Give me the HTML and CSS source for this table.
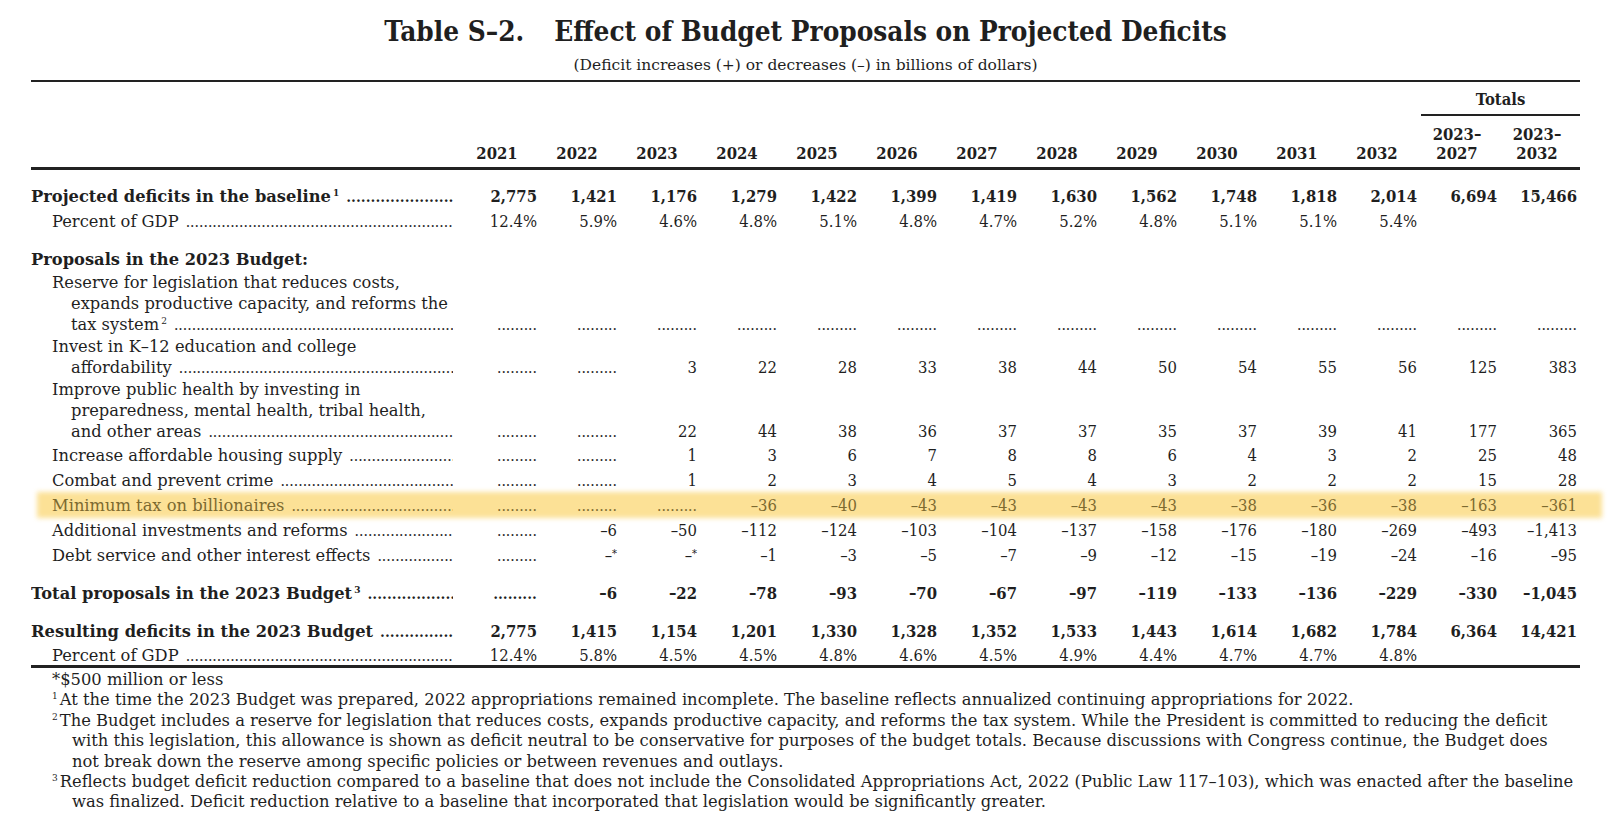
FILE: index.html
```html
<!DOCTYPE html>
<html lang="en">
<head>
<meta charset="utf-8">
<title>Table S-2. Effect of Budget Proposals on Projected Deficits</title>
<link rel="stylesheet" href="styles.css">
</head>
<body>
<div class="page">
  <h1 class="title"><span class="tno">Table S–2.</span><span>Effect of Budget Proposals on Projected Deficits</span></h1>
  <p class="subtitle">(Deficit increases (+) or decreases (–) in billions of dollars)</p>

  <div class="table">
    <div class="grid totals-row"><div class="totals">Totals</div></div>
    <div class="grid years">
      <div></div>
      <div>2021</div><div>2022</div><div>2023</div><div>2024</div><div>2025</div><div>2026</div>
      <div>2027</div><div>2028</div><div>2029</div><div>2030</div><div>2031</div><div>2032</div>
      <div>2023–<br>2027</div><div>2023–<br>2032</div>
    </div>

    <div class="tbody">
      <div class="grid row bold">
        <div class="lbl l0">Projected deficits in the baseline<sup>1</sup></div>
        <div>2,775</div><div>1,421</div><div>1,176</div><div>1,279</div><div>1,422</div><div>1,399</div><div>1,419</div><div>1,630</div><div>1,562</div><div>1,748</div><div>1,818</div><div>2,014</div><div>6,694</div><div>15,466</div>
      </div>
      <div class="grid row">
        <div class="lbl l1">Percent of GDP</div>
        <div>12.4%</div><div>5.9%</div><div>4.6%</div><div>4.8%</div><div>5.1%</div><div>4.8%</div><div>4.7%</div><div>5.2%</div><div>4.8%</div><div>5.1%</div><div>5.1%</div><div>5.4%</div><div></div><div></div>
      </div>

      <div class="spacer"></div>

      <div class="grid row bold">
        <div class="lbl l0 nodots">Proposals in the 2023 Budget:</div>
      </div>
      <div class="grid row ml">
        <div class="lbl l1">Reserve for legislation that reduces costs,<br>expands productive capacity, and reforms the<br>tax system<sup>2</sup></div>
        <div class="e"></div><div class="e"></div><div class="e"></div><div class="e"></div><div class="e"></div><div class="e"></div><div class="e"></div><div class="e"></div><div class="e"></div><div class="e"></div><div class="e"></div><div class="e"></div><div class="e"></div><div class="e"></div>
      </div>
      <div class="grid row ml">
        <div class="lbl l1">Invest in K–12 education and college<br>affordability</div>
        <div class="e"></div><div class="e"></div><div>3</div><div>22</div><div>28</div><div>33</div><div>38</div><div>44</div><div>50</div><div>54</div><div>55</div><div>56</div><div>125</div><div>383</div>
      </div>
      <div class="grid row ml">
        <div class="lbl l1">Improve public health by investing in<br>preparedness, mental health, tribal health,<br>and other areas</div>
        <div class="e"></div><div class="e"></div><div>22</div><div>44</div><div>38</div><div>36</div><div>37</div><div>37</div><div>35</div><div>37</div><div>39</div><div>41</div><div>177</div><div>365</div>
      </div>
      <div class="grid row">
        <div class="lbl l1">Increase affordable housing supply</div>
        <div class="e"></div><div class="e"></div><div>1</div><div>3</div><div>6</div><div>7</div><div>8</div><div>8</div><div>6</div><div>4</div><div>3</div><div>2</div><div>25</div><div>48</div>
      </div>
      <div class="grid row">
        <div class="lbl l1">Combat and prevent crime</div>
        <div class="e"></div><div class="e"></div><div>1</div><div>2</div><div>3</div><div>4</div><div>5</div><div>4</div><div>3</div><div>2</div><div>2</div><div>2</div><div>15</div><div>28</div>
      </div>
      <div class="grid row hl">
        <div class="lbl l1">Minimum tax on billionaires</div>
        <div class="e"></div><div class="e"></div><div class="e"></div><div>–36</div><div>–40</div><div>–43</div><div>–43</div><div>–43</div><div>–43</div><div>–38</div><div>–36</div><div>–38</div><div>–163</div><div>–361</div>
      </div>
      <div class="grid row">
        <div class="lbl l1">Additional investments and reforms</div>
        <div class="e"></div><div>–6</div><div>–50</div><div>–112</div><div>–124</div><div>–103</div><div>–104</div><div>–137</div><div>–158</div><div>–176</div><div>–180</div><div>–269</div><div>–493</div><div>–1,413</div>
      </div>
      <div class="grid row">
        <div class="lbl l1">Debt service and other interest effects</div>
        <div class="e"></div><div>–<span class="star">*</span></div><div>–<span class="star">*</span></div><div>–1</div><div>–3</div><div>–5</div><div>–7</div><div>–9</div><div>–12</div><div>–15</div><div>–19</div><div>–24</div><div>–16</div><div>–95</div>
      </div>

      <div class="spacer"></div>

      <div class="grid row bold">
        <div class="lbl l0">Total proposals in the 2023 Budget<sup>3</sup></div>
        <div class="e"></div><div>–6</div><div>–22</div><div>–78</div><div>–93</div><div>–70</div><div>–67</div><div>–97</div><div>–119</div><div>–133</div><div>–136</div><div>–229</div><div>–330</div><div>–1,045</div>
      </div>

      <div class="spacer"></div>

      <div class="grid row bold">
        <div class="lbl l0">Resulting deficits in the 2023 Budget</div>
        <div>2,775</div><div>1,415</div><div>1,154</div><div>1,201</div><div>1,330</div><div>1,328</div><div>1,352</div><div>1,533</div><div>1,443</div><div>1,614</div><div>1,682</div><div>1,784</div><div>6,364</div><div>14,421</div>
      </div>
      <div class="grid row last">
        <div class="lbl l1">Percent of GDP</div>
        <div>12.4%</div><div>5.8%</div><div>4.5%</div><div>4.5%</div><div>4.8%</div><div>4.6%</div><div>4.5%</div><div>4.9%</div><div>4.4%</div><div>4.7%</div><div>4.7%</div><div>4.8%</div><div></div><div></div>
      </div>
    </div>
  </div>

  <div class="notes">
    <p class="fn">*$500 million or less</p>
    <p class="fn"><sup>1</sup>At the time the 2023 Budget was prepared, 2022 appropriations remained incomplete. The baseline reflects annualized continuing appropriations for 2022.</p>
    <p class="fn"><sup>2</sup>The Budget includes a reserve for legislation that reduces costs, expands productive capacity, and reforms the tax system. While the President is committed to reducing the deficit<br>with this legislation, this allowance is shown as deficit neutral to be conservative for purposes of the budget totals. Because discussions with Congress continue, the Budget does<br>not break down the reserve among specific policies or between revenues and outlays.</p>
    <p class="fn"><sup>3</sup>Reflects budget deficit reduction compared to a baseline that does not include the Consolidated Appropriations Act, 2022 (Public Law 117–103), which was enacted after the baseline<br>was finalized. Deficit reduction relative to a baseline that incorporated that legislation would be significantly greater.</p>
  </div>
</div>
</body>
</html>
```

FILE: styles.css
```css
* { box-sizing: border-box; }

html, body {
  margin: 0;
  padding: 0;
  background: #ffffff;
}

body {
  font-family: "DejaVu Serif", serif;
  color: #1f1f1f;
  font-size: 16.3px;
}

.page {
  width: 1624px;
  padding-left: 31px;
}

.title {
  width: 1549px;
  margin: 0;
  padding-top: 16px;
  font-family: "DejaVu Serif Condensed", "DejaVu Serif", serif;
  font-stretch: semi-condensed;
  font-size: 27.7px;
  line-height: 32px;
  font-weight: bold;
  text-align: center;
  white-space: nowrap;
}

.title .tno {
  margin-right: 30px;
}

.subtitle {
  width: 1549px;
  margin: 7px 0 0;
  font-size: 15.5px;
  line-height: 20px;
  text-align: center;
}

.table {
  width: 1549px;
  margin-top: 5px;
  border-top: 2px solid #222;
}

.grid {
  display: grid;
  grid-template-columns: 426px repeat(14, 80px) 3px;
  font-family: "DejaVu Serif Condensed", "DejaVu Serif", serif;
  font-stretch: semi-condensed;
  font-size: 16.5px;
}

.totals-row {
  padding-top: 8px;
}

.totals {
  grid-column: 14 / 17;
  margin-left: 4px;
  text-align: center;
  font-weight: bold;
  line-height: 20px;
  padding-bottom: 4px;
  border-bottom: 2px solid #222;
}

.years {
  padding-top: 9px;
  padding-bottom: 4px;
  border-bottom: 3px solid #222;
  align-items: end;
  font-weight: bold;
  line-height: 19px;
  text-align: center;
}

.tbody {
  padding-top: 14px;
}

.row {
  line-height: 21px;
  padding: 2px 0;
  align-items: end;
  text-align: right;
  white-space: nowrap;
}

.row.ml {
  padding: 0 0 1px;
}

.row.last {
  padding: 2px 0 0;
  line-height: 19px;
  border-bottom: 3px solid #222;
}

.row.bold {
  font-weight: bold;
}

.spacer {
  height: 13px;
}

.lbl {
  font-family: "DejaVu Serif", serif;
  font-stretch: normal;
  font-size: 16.3px;
  text-align: left;
  overflow: hidden;
  white-space: nowrap;
  margin-right: 4px;
}

.lbl.l0 {
  padding-left: 0;
}

.lbl.l1 {
  padding-left: 40px;
  text-indent: -19px;
}

.lbl::after {
  content: "......................................................................................................................................................";
  padding-left: 7px;
  font-size: 14px;
  line-height: 0;
}

.lbl.nodots::after {
  content: none;
}

.e::after {
  content: ".........";
  font-family: "DejaVu Serif", serif;
  font-stretch: normal;
  font-size: 14px;
  line-height: 0;
}

sup {
  font-size: 9px;
  line-height: 0;
  vertical-align: 6px;
  padding-left: 2px;
}

.star {
  font-size: 11px;
  line-height: 0;
  vertical-align: 4px;
}

.row.hl {
  position: relative;
  isolation: isolate;
  color: #7c6a30;
}

.row.hl::before {
  content: "";
  position: absolute;
  left: 6px;
  right: -22px;
  top: -1px;
  bottom: 0;
  background: #fce196;
  filter: blur(2.5px);
  z-index: -1;
}

.notes {
  width: 1549px;
  margin-top: 2px;
}

.fn {
  margin: 0;
  padding-left: 41px;
  text-indent: -20px;
  font-size: 16.33px;
  line-height: 20.4px;
  white-space: nowrap;
}

.fn sup {
  padding-left: 0;
  padding-right: 2px;
}
```
